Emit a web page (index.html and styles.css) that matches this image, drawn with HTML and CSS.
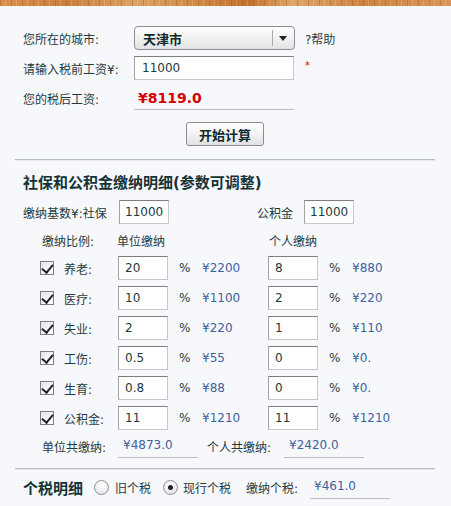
FILE: index.html
```html
<!DOCTYPE html>
<html lang="zh">
<head>
<meta charset="utf-8">
<title>个税计算器</title>
<link rel="stylesheet" href="styles.css">
</head>
<body>
<div class="wood"></div>
<div class="main">
  <div class="form">
    <div class="row r1">
      <span class="lbl">您所在的城市:</span>
      <div class="select"><span class="sel-text">天津市</span><span class="sel-arrow"></span></div>
      <span class="help">?帮助</span>
    </div>
    <div class="row r2">
      <span class="lbl">请输入税前工资¥:</span>
      <div class="input wide">11000</div>
      <span class="star">*</span>
    </div>
    <div class="row r3">
      <span class="lbl">您的税后工资:</span>
      <div class="result">¥8119.0</div>
    </div>
  </div>
  <div class="btn-row"><button class="btn">开始计算</button></div>
  <div class="hr"></div>

  <h2 class="heading">社保和公积金缴纳明细(参数可调整)</h2>
  <div class="base-row">
    <span class="base-lbl">缴纳基数¥:社保</span>
    <div class="input small">11000</div>
    <span class="base-lbl2">公积金</span>
    <div class="input small">11000</div>
  </div>
  <div class="grid head">
    <span class="h-ratio">缴纳比例:</span>
    <span class="h-unit">单位缴纳</span>
    <span class="h-person">个人缴纳</span>
  </div>
  <div class="grid item">
    <span class="cb"></span><span class="name">养老:</span>
    <div class="input cell">20</div><span class="pct">%</span><span class="val">¥2200</span>
    <div class="input cell">8</div><span class="pct">%</span><span class="val">¥880</span>
  </div>
  <div class="grid item">
    <span class="cb"></span><span class="name">医疗:</span>
    <div class="input cell">10</div><span class="pct">%</span><span class="val">¥1100</span>
    <div class="input cell">2</div><span class="pct">%</span><span class="val">¥220</span>
  </div>
  <div class="grid item">
    <span class="cb"></span><span class="name">失业:</span>
    <div class="input cell">2</div><span class="pct">%</span><span class="val">¥220</span>
    <div class="input cell">1</div><span class="pct">%</span><span class="val">¥110</span>
  </div>
  <div class="grid item">
    <span class="cb"></span><span class="name">工伤:</span>
    <div class="input cell">0.5</div><span class="pct">%</span><span class="val">¥55</span>
    <div class="input cell">0</div><span class="pct">%</span><span class="val">¥0.</span>
  </div>
  <div class="grid item">
    <span class="cb"></span><span class="name">生育:</span>
    <div class="input cell">0.8</div><span class="pct">%</span><span class="val">¥88</span>
    <div class="input cell">0</div><span class="pct">%</span><span class="val">¥0.</span>
  </div>
  <div class="grid item">
    <span class="cb"></span><span class="name">公积金:</span>
    <div class="input cell">11</div><span class="pct">%</span><span class="val">¥1210</span>
    <div class="input cell">11</div><span class="pct">%</span><span class="val">¥1210</span>
  </div>
  <div class="totals">
    <span class="t-lbl">单位共缴纳:</span>
    <span class="t-val">¥4873.0</span>
    <span class="t-lbl t-lbl2">个人共缴纳:</span>
    <span class="t-val">¥2420.0</span>
  </div>
  <div class="hr hr2"></div>
  <div class="tax-row">
    <span class="tax-title">个税明细</span>
    <span class="radio"></span><span class="r-lbl r-old">旧个税</span>
    <span class="radio on"></span><span class="r-lbl r-new">现行个税</span>
    <span class="tax-lbl">缴纳个税:</span>
    <span class="t-val tax-val">¥461.0</span>
  </div>
</div>
</body>
</html>
```
FILE: styles.css
```css
* { box-sizing: border-box; }
html, body { margin: 0; padding: 0; }
body {
  background: #f7f8fc;
  color: #1f3a3d;
  font-family: "DejaVu Sans", "Noto Sans CJK SC", sans-serif;
  font-size: 12px;
  width: 451px;
  height: 506px;
  overflow: hidden;
}
.wood {
  height: 6px;
  background:
    repeating-linear-gradient(90deg, rgba(150,80,20,0.35) 0 1px, transparent 1px 5px, rgba(255,220,160,0.25) 5px 6px, transparent 6px 11px),
    linear-gradient(90deg, #d8914c 0%, #c9803e 15%, #dca064 30%, #cf8844 45%, #c2702c 55%, #dfa46a 65%, #cd8542 80%, #d9955a 100%);
}
.main { padding: 0 16px 0 15px; }
.form { padding: 20px 0 0 8px; }
.row { display: flex; align-items: center; height: 24px; }
.r2, .r3 { margin-top: 6px; }
.lbl { width: 111px; }
.select {
  width: 161px; height: 24px;
  border: 1px solid #8c8e90;
  border-radius: 4px;
  background: linear-gradient(#ffffff, #f0f0f0 55%, #e2e3e5);
  display: flex; align-items: center;
}
.sel-text { font-weight: bold; font-size: 13px; padding-left: 8px; flex: 1; color: #102a2c; }
.sel-arrow {
  width: 22px; height: 16px;
  border-left: 1px solid #a8aaac;
  position: relative;
}
.sel-arrow::after {
  content: ""; position: absolute; left: 6px; top: 6px;
  border-left: 4px solid transparent; border-right: 4px solid transparent;
  border-top: 5px solid #222;
}
.help { margin-left: 10px; color: #2a3f44; }
.input {
  background: #fff;
  border: 1px solid #c6c8cc;
  border-top-color: #7c7e80;
  border-left-color: #a0a2a4;
  height: 24px;
  display: flex; align-items: center;
  padding-left: 6px;
  color: #1d3a3c;
}
.wide { width: 160px; padding-left: 7px; }
.star { margin-left: 11px; color: #e00; font-size: 10px; align-self: flex-start; margin-top: 4px; }
.r3 { align-items: stretch; }
.r3 .lbl { display: flex; align-items: center; }
.result {
  width: 160px;
  border-bottom: 1px solid #b8bcc4;
  color: #d80000; font-weight: bold; font-size: 14px;
  padding-left: 4px;
  display: flex; align-items: center;
}
.btn-row { display: flex; justify-content: center; margin-top: 12px; }
.btn {
  width: 78px; height: 24px;
  border: 1px solid #8a8c8e;
  border-radius: 3px;
  background: linear-gradient(#ffffff, #f1f1f1 55%, #e0e1e3);
  font-family: inherit;
  font-weight: bold; font-size: 13px;
  color: #102a2c;
  padding: 0;
}
.hr { margin-top: 13px; background: #b6bac2; border-bottom: 1px solid #e6e8ee; height: 2px; }
.heading {
  margin: 12px 0 0 8px;
  font-size: 15px; font-weight: bold; line-height: 20px;
  color: #153336;
}
.base-row { display: flex; align-items: center; margin: 7px 0 0 8px; height: 24px; }
.base-lbl { width: 96px; }
.base-lbl2 { width: 47px; margin-left: 88px; }
.small { width: 50px; padding-left: 5px; }
.grid {
  display: grid;
  grid-template-columns: 24px 54px 50px 34px 66px 50px 34px 1fr;
  margin-left: 25px;
  align-items: center;
}
.head { margin-top: 6px; height: 20px; }
.h-ratio { grid-column: 1 / 3; padding-left: 2px; }
.h-unit { grid-column: 3 / 6; margin-left: -1px; }
.h-person { grid-column: 6 / 9; margin-left: 1px; }
.item { margin-top: 6px; height: 24px; }
.cell { width: 50px; }
.pct { padding-left: 11px; }
.val { color: #3c62a0; }
.cb {
  width: 14px; height: 14px;
  border: 1px solid #7d7f82;
  background: linear-gradient(135deg, #e4e5e7, #ffffff);
  position: relative;
}
.cb::after {
  content: ""; position: absolute;
  left: 3px; top: 0px; width: 5px; height: 9px;
  border-right: 2px solid #222; border-bottom: 2px solid #222;
  transform: rotate(40deg);
}
.totals { display: flex; margin: 4px 0 0 27px; height: 24px; align-items: stretch; }
.t-lbl { width: 76px; display: flex; align-items: center; }
.t-lbl2 { width: 77px; margin-left: 9px; }
.t-val {
  width: 80px;
  border-bottom: 1px solid #b8bcc4;
  color: #3c62a0;
  padding-left: 5px;
  display: flex; align-items: center;
  padding-bottom: 2px;
}
.hr2 { margin-top: 10px; }
.tax-row { display: flex; align-items: stretch; margin: 5px 0 0 8px; height: 24px; }
.tax-row > span { display: flex; align-items: center; flex: none; }
.tax-title { font-size: 15px; font-weight: bold; color: #153336; width: 71px; }
.radio {
  width: 15px; height: 15px; border-radius: 50%;
  border: 1px solid #8d8f92;
  background: radial-gradient(circle at 50% 35%, #ffffff, #e8e9eb 70%, #d8d9db);
  align-self: center;
  position: relative;
}
.tax-row > .radio { align-self: center; }
.radio.on::after {
  content: ""; position: absolute; left: 4px; top: 4px;
  width: 5px; height: 5px; border-radius: 50%; background: #222;
}
.r-old { margin-left: 6px; width: 48px; }
.r-new { margin-left: 5px; width: 63px; }
.tax-lbl { width: 64px; }
.tax-val { width: 80px; padding-left: 4px; }
```
